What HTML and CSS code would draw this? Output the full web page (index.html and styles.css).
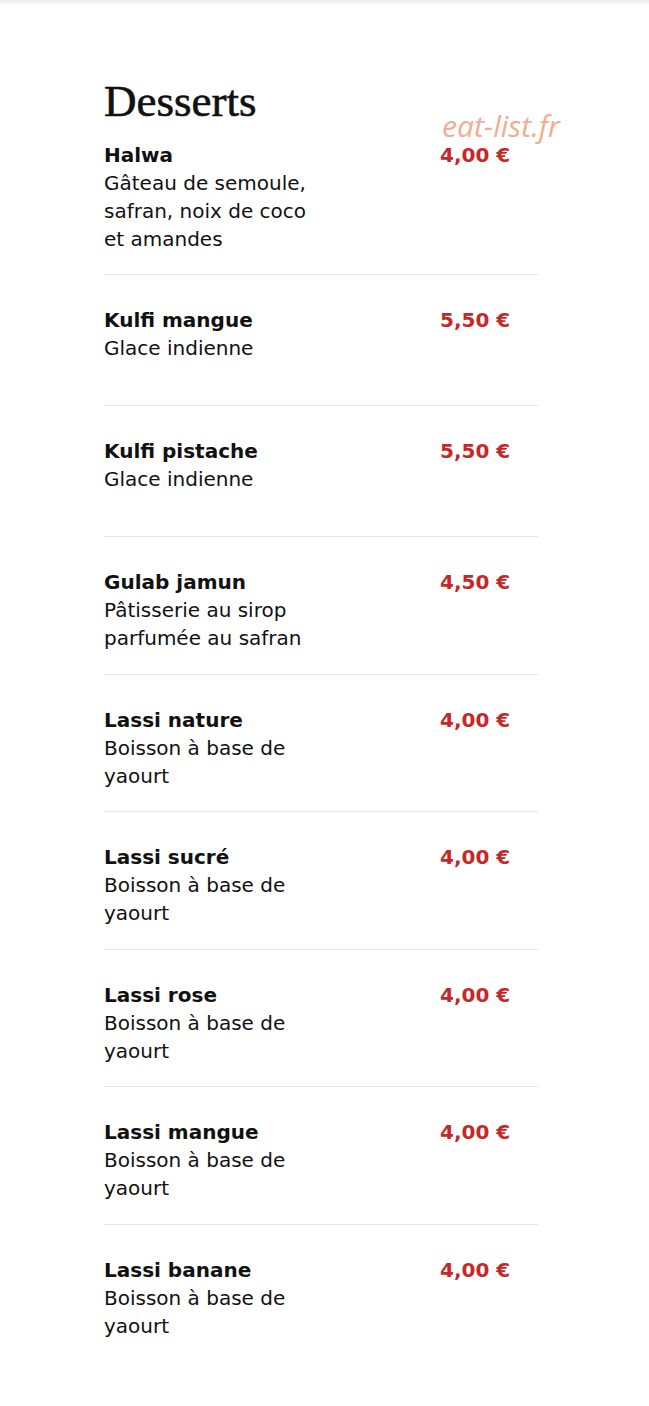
FILE: index.html
```html
<!DOCTYPE html>
<html lang="fr">
<head>
<meta charset="UTF-8">
<meta name="viewport" content="width=device-width, initial-scale=1.0">
<title>Desserts</title>
<link rel="stylesheet" href="styles.css">
</head>
<body>

<div class="top-shadow"></div>

<div class="menu">
    <h2 class="menu-title">Desserts</h2>
    <span class="watermark">eat-list.fr</span>

    <div class="item">
        <div class="item-text">
            <div class="item-name">Halwa</div>
            <div class="item-desc">Gâteau de semoule, safran, noix de coco et amandes</div>
        </div>
        <div class="item-price">4,00 €</div>
    </div>

    <div class="item">
        <div class="item-text">
            <div class="item-name">Kulfi mangue</div>
            <div class="item-desc">Glace indienne</div>
        </div>
        <div class="item-price">5,50 €</div>
    </div>

    <div class="item">
        <div class="item-text">
            <div class="item-name">Kulfi pistache</div>
            <div class="item-desc">Glace indienne</div>
        </div>
        <div class="item-price">5,50 €</div>
    </div>

    <div class="item">
        <div class="item-text">
            <div class="item-name">Gulab jamun</div>
            <div class="item-desc">Pâtisserie au sirop parfumée au safran</div>
        </div>
        <div class="item-price">4,50 €</div>
    </div>

    <div class="item">
        <div class="item-text">
            <div class="item-name">Lassi nature</div>
            <div class="item-desc">Boisson à base de yaourt</div>
        </div>
        <div class="item-price">4,00 €</div>
    </div>

    <div class="item">
        <div class="item-text">
            <div class="item-name">Lassi sucré</div>
            <div class="item-desc">Boisson à base de yaourt</div>
        </div>
        <div class="item-price">4,00 €</div>
    </div>

    <div class="item">
        <div class="item-text">
            <div class="item-name">Lassi rose</div>
            <div class="item-desc">Boisson à base de yaourt</div>
        </div>
        <div class="item-price">4,00 €</div>
    </div>

    <div class="item">
        <div class="item-text">
            <div class="item-name">Lassi mangue</div>
            <div class="item-desc">Boisson à base de yaourt</div>
        </div>
        <div class="item-price">4,00 €</div>
    </div>

    <div class="item">
        <div class="item-text">
            <div class="item-name">Lassi banane</div>
            <div class="item-desc">Boisson à base de yaourt</div>
        </div>
        <div class="item-price">4,00 €</div>
    </div>
</div>

</body>
</html>
```

FILE: styles.css
```css
/* Carte des desserts */
body {
    font-family: "DejaVu Sans", Verdana, sans-serif;
    background-color: #fff;
    color: #111;
    margin: 0;
    padding: 0;
}

.top-shadow {
    height: 5px;
    background: linear-gradient(#ececec, #fff);
}

.menu {
    position: relative;
    width: 434px;
    margin: 0 0 0 104px;
    padding-top: 71px;
}

.menu-title {
    font-family: "Liberation Serif", "Times New Roman", serif;
    font-size: 45px;
    font-weight: normal;
    line-height: 50px;
    margin: 0 0 14.5px 0;
    color: #111;
    -webkit-text-stroke: 0.6px #111;
}

.watermark {
    position: absolute;
    top: 107px;
    left: 338px;
    white-space: nowrap;
    font-family: "Open Sans", sans-serif;
    font-style: italic;
    font-size: 30px;
    line-height: 28px;
    color: #f0a585;
    opacity: 0.9;
}

.item {
    display: grid;
    grid-template-columns: 1fr 98px;
    padding: 31px 0 21.5px 0;
    border-bottom: 1px solid #e6e6e6;
    font-size: 20px;
    line-height: 28px;
}

.item:first-of-type {
    padding-top: 0;
}

.item:last-child {
    border-bottom: none;
}

.item-text {
    min-height: 77.5px;
}

.item-name {
    font-weight: bold;
}

.item-desc {
    max-width: 222px;
}

.item-price {
    font-weight: bold;
    color: #c62828;
}
```
